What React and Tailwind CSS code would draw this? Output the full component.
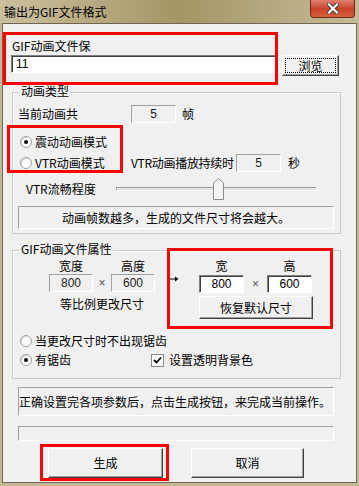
import React from "react";

const cjk = "font-['Noto_Sans_CJK_SC',sans-serif]";
const num = "font-['Liberation_Sans',sans-serif]";

const Radio = ({ checked }) => (
  <span className="w-[12px] h-[12px] rounded-full border border-[#a0a0a0] bg-white flex items-center justify-center shadow-[inset_1px_1px_0_#d8d8d8]">
    {checked && <span className="w-[4px] h-[4px] rounded-full bg-black" />}
  </span>
);

const ReadBox = ({ value, className }) => (
  <div className={`h-[18px] shrink-0 border border-t-[#a0a0a0] border-l-[#a0a0a0] border-b-white border-r-white bg-[#f0f0f0] flex items-center justify-center text-[12px] text-[#222] ${num} ${className}`}>
    {value}
  </div>
);

const EditBox = ({ value, className }) => (
  <div className={`h-[18px] shrink-0 border border-t-[#808080] border-l-[#808080] border-b-white border-r-white shadow-[inset_1px_1px_0_#404040] bg-white flex items-center justify-center text-[12px] text-black ${num} ${className}`}>
    {value}
  </div>
);

const Button = ({ children, className }) => (
  <div className={`shrink-0 border border-t-white border-l-white border-r-[#404040] border-b-[#404040] shadow-[inset_-1px_-1px_0_#a0a0a0] bg-[#f0f0f0] flex items-center justify-center text-[12px] text-black ${className}`}>
    {children}
  </div>
);

const Group = ({ title, className, children }) => (
  <div className={`relative ml-[9px] w-[329px] border border-[#c9c9c9] shadow-[inset_1px_1px_0_#ffffff] flex flex-col ${className}`}>
    <span className="absolute -top-[9px] left-[6px] px-[2px] bg-[#f0f0f0] text-[12px] leading-[13px] whitespace-nowrap">{title}</span>
    {children}
  </div>
);

export default function App() {
  return (
    <div className={`relative w-[359px] h-[486px] bg-[#c2b894] overflow-hidden ${cjk} leading-[14px] text-black whitespace-nowrap`}>
      {/* title bar */}
      <div className="h-[23px] flex items-start bg-gradient-to-r from-[#cbc09e] via-[#a59566] to-[#c6bb98]">
        <span className="ml-[4px] mt-[4px] text-[12px] leading-[16px] text-black">输出为GIF文件格式</span>
        <div className="ml-auto mr-[4px] w-[45px] h-[18px] rounded-b-[4px] border border-[#6b2a1c] border-t-0 bg-gradient-to-b from-[#e08070] via-[#c8422a] to-[#d8603e] flex items-center justify-center">
          <svg width="12" height="11" viewBox="0 0 12 11">
            <path d="M2 1.5 L10 9.5 M10 1.5 L2 9.5" stroke="#3a3a3a" strokeWidth="4" strokeLinecap="square" />
            <path d="M2 1.5 L10 9.5 M10 1.5 L2 9.5" stroke="#ffffff" strokeWidth="2.2" strokeLinecap="square" />
          </svg>
        </div>
      </div>

      {/* client area */}
      <div className="mx-[2px] h-[460px] border border-[#6f6750] bg-[#f0f0f0] flex flex-col">
        <div className="mt-[15px] ml-[9px] h-[14px] text-[12px]">GIF动画文件保</div>
        <div className="mt-[2px] flex items-start">
          <EditBox value="11" className="ml-[8px] w-[268px] !justify-start pl-[4px]" />
          <Button className="ml-[3px] w-[57px] h-[21px]">
            <span className="border border-dotted border-black px-[12px] leading-[13px]">浏览</span>
          </Button>
        </div>

        {/* 动画类型 */}
        <Group title="动画类型" className="mt-[16px] h-[142px]">
          <div className="mt-[12px] h-[18px] flex items-center text-[12px]">
            <span className="ml-[5px] w-[113px] shrink-0">当前动画共</span>
            <ReadBox value="5" className="w-[45px]" />
            <span className="ml-[6px]">帧</span>
          </div>
          <div className="mt-[11px] h-[16px] flex items-center text-[12px]">
            <span className="ml-[7px]"><Radio checked /></span>
            <span className="ml-[3px]">震动动画模式</span>
          </div>
          <div className="mt-[4px] h-[18px] flex items-center text-[12px]">
            <span className="ml-[7px]"><Radio /></span>
            <span className="ml-[3px] w-[96px] shrink-0">VTR动画模式</span>
            <span className="w-[105px] shrink-0 tracking-[-0.3px]">VTR动画播放持续时</span>
            <ReadBox value="5" className="w-[45px]" />
            <span className="ml-[7px]">秒</span>
          </div>
          <div className="mt-[6px] h-[22px] flex items-center text-[12px]">
            <span className="ml-[13px] w-[90px] shrink-0">VTR流畅程度</span>
            <div className="relative w-[201px] h-[22px] flex items-center">
              <div className="w-full h-[4px] border border-t-[#a0a0a0] border-l-[#a0a0a0] border-b-white border-r-white bg-[#e3e3e3]" />
              <svg className="absolute left-[97px] top-0" width="11" height="22" viewBox="0 0 11 22">
                <path d="M0.5 21.5 V5 L5.5 0.5 L10.5 5 V21.5 Z" fill="#f4f4f4" stroke="#8a8a8a" />
                <path d="M1.5 20.5 V5.4 L5.5 1.8" fill="none" stroke="#ffffff" />
              </svg>
            </div>
          </div>
          <div className="mt-[6px] ml-[5px] w-[316px] h-[23px] border border-t-[#a0a0a0] border-l-[#a0a0a0] border-b-white border-r-white flex items-center justify-center text-[12px]">
            动画帧数越多，生成的文件尺寸将会越大。
          </div>
        </Group>

        {/* GIF动画文件属性 */}
        <Group title="GIF动画文件属性" className="mt-[16px] h-[129px]">
          <div className="flex items-start">
            <div className="ml-[36px] mt-[8px] flex flex-col">
              <div className="h-[13px] flex text-[12px] leading-[13px]">
                <span className="w-[44px] text-center">宽度</span>
                <span className="w-[18px]" />
                <span className="w-[44px] text-center">高度</span>
              </div>
              <div className="mt-[2px] flex items-center">
                <ReadBox value="800" className="w-[44px]" />
                <span className={`w-[18px] text-center text-[12px] text-[#555] ${num}`}>×</span>
                <ReadBox value="600" className="w-[44px]" />
              </div>
              <div className="mt-[5px] h-[14px] text-[12px] text-center">等比例更改尺寸</div>
            </div>
            <svg className="ml-[15px] mt-[25px]" width="9" height="6" viewBox="0 0 9 6">
              <path d="M0 3 H7" stroke="#000" strokeWidth="1" />
              <path d="M5 0.5 L8.5 3 L5 5.5 Z" fill="#000" />
            </svg>
            <div className="ml-[20px] mt-[8px] flex flex-col">
              <div className="h-[13px] flex text-[12px] leading-[13px]">
                <span className="w-[45px] text-center">宽</span>
                <span className="w-[23px]" />
                <span className="w-[45px] text-center">高</span>
              </div>
              <div className="mt-[3px] flex items-center">
                <EditBox value="800" className="w-[45px]" />
                <span className={`w-[23px] text-center text-[12px] text-[#555] ${num}`}>×</span>
                <EditBox value="600" className="w-[45px]" />
              </div>
              <Button className="mt-[3px] w-[114px] h-[23px]">恢复默认尺寸</Button>
            </div>
          </div>
          <div className="mt-[15px] h-[14px] flex items-center text-[12px]">
            <span className="ml-[7px]"><Radio /></span>
            <span className="ml-[3px]">当更改尺寸时不出现锯齿</span>
          </div>
          <div className="mt-[5px] h-[14px] flex items-center text-[12px]">
            <span className="ml-[7px]"><Radio checked /></span>
            <span className="ml-[3px] w-[116px] shrink-0">有锯齿</span>
            <span className="w-[13px] h-[13px] shrink-0 border border-[#8a8a8a] bg-white flex items-center justify-center">
              <svg width="9" height="9" viewBox="0 0 9 9">
                <path d="M1 4 L3.5 6.5 L8 1.5" fill="none" stroke="#000" strokeWidth="1.8" />
              </svg>
            </span>
            <span className="ml-[5px]">设置透明背景色</span>
          </div>
        </Group>

        <div className="mt-[8px] ml-[15px] w-[316px] h-[29px] border border-t-[#a0a0a0] border-l-[#a0a0a0] border-b-white border-r-white flex items-center text-[12px]">
          正确设置完各项参数后，点击生成按钮，来完成当前操作。
        </div>
        <div className="mt-[10px] ml-[15px] w-[316px] h-[15px] border border-t-[#a0a0a0] border-l-[#a0a0a0] border-b-white border-r-white" />
        <div className="mt-[7px] flex">
          <Button className="ml-[45px] w-[115px] h-[30px]">生成</Button>
          <Button className="ml-[28px] w-[113px] h-[30px]">取消</Button>
        </div>
      </div>

      {/* annotation boxes */}
      <div className="absolute left-[3px] top-[32px] w-[275px] h-[53px] border-[3px] border-[#ff0000]" />
      <div className="absolute left-[7px] top-[125px] w-[116px] h-[48px] border-[3px] border-[#ff0000]" />
      <div className="absolute left-[167px] top-[248px] w-[166px] h-[81px] border-[3px] border-[#ff0000]" />
      <div className="absolute left-[40px] top-[444px] w-[129px] h-[37px] border-[3px] border-[#ff0000]" />
    </div>
  );
}
